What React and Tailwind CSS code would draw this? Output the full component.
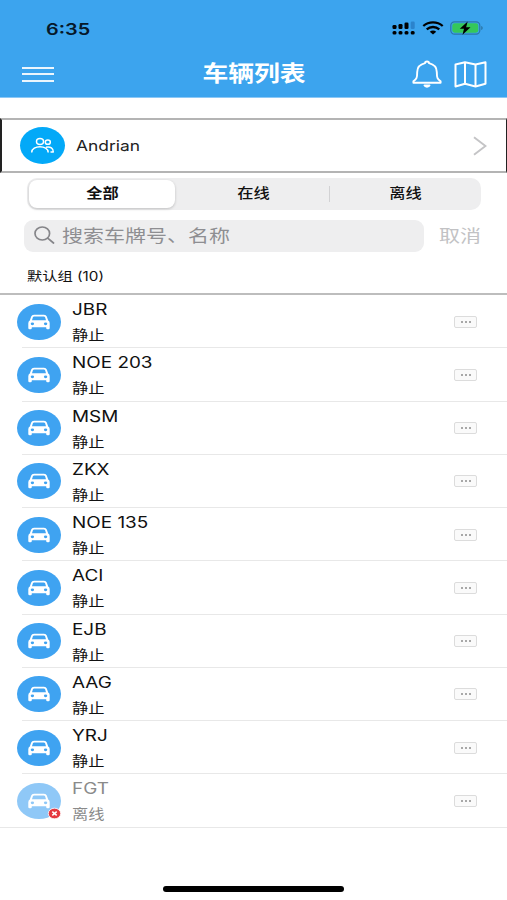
import { useState } from "react";

const vehicles = [
  { name: "JBR", online: true },
  { name: "NOE 203", online: true },
  { name: "MSM", online: true },
  { name: "ZKX", online: true },
  { name: "NOE 135", online: true },
  { name: "ACI", online: true },
  { name: "EJB", online: true },
  { name: "AAG", online: true },
  { name: "YRJ", online: true },
  { name: "FGT", online: false },
];

const tabs = ["全部", "在线", "离线"];

function StatusBar() {
  return (
    <div className="flex h-[50px] items-center justify-between pt-[5px] pr-[23px] pl-[46px]">
      <span className="mt-[2px] origin-left scale-x-[1.24] text-[16px] leading-none font-semibold text-[#06182a]">6:35</span>
      <div className="flex items-center">
        <svg width="24" height="14" viewBox="0 0 24 14" fill="#000">
          <rect x="0.5" y="4" width="4" height="4" rx="1.3" />
          <rect x="6.5" y="3" width="4" height="5" rx="1.3" />
          <rect x="12.5" y="1.5" width="4" height="6.5" rx="1.3" />
          <rect x="18.7" y="0.5" width="4" height="7.5" rx="1.3" fill="#2b83cc" />
          <rect x="0.5" y="10" width="4" height="3.6" rx="1.5" />
          <rect x="6.5" y="10" width="4" height="3.6" rx="1.5" />
          <rect x="12.5" y="10" width="4" height="3.6" rx="1.5" />
          <rect x="18.7" y="10" width="4" height="3.6" rx="1.5" />
        </svg>
        <svg className="ml-[6px]" width="22" height="14" viewBox="0 0 22 14" fill="none" stroke="#000" strokeWidth="2.3">
          <path d="M1.3 5C6.8.2 15.2.2 20.7 5" />
          <path d="M4.7 8.4C8.4 5.2 13.6 5.2 17.3 8.4" />
          <path d="M7.8 10.8C9.7 9.2 12.3 9.2 14.2 10.8L11 13.6z" fill="#000" stroke="none" />
        </svg>
        <svg className="ml-[6px]" width="34" height="14" viewBox="0 0 34 14">
          <rect x="0.8" y="0.8" width="29" height="12.4" rx="3.6" fill="none" stroke="#2c77a8" strokeWidth="1.2" />
          <rect x="2.3" y="2.3" width="26" height="9.4" rx="2.4" fill="#35c759" />
          <path d="M31.2 5v4c2-.5 2-3.5 0-4z" fill="#2c77a8" />
          <path d="M17.7.5 9.8 7.8h4.2l-1.5 5.9 8-7.5h-4.4z" fill="#000" />
        </svg>
      </div>
    </div>
  );
}

function Header() {
  return (
    <header className="h-[98px] border-b border-[#8cc8f6] bg-[#3ca4ee]">
      <StatusBar />
      <div className="grid h-[48px] grid-cols-[1fr_auto_1fr] items-center pr-[20px] pl-[22px]">
        <button className="flex w-[32px] flex-col gap-[4.5px]" aria-label="menu">
          <span className="h-[2px] bg-white/90" />
          <span className="h-[2px] bg-white/90" />
          <span className="h-[2px] bg-white/90" />
        </button>
        <h1 className="scale-x-[1.2] text-[21.5px] leading-none font-bold text-white">车辆列表</h1>
        <div className="flex justify-end gap-[12px]">
          <svg width="30" height="28" viewBox="0 0 30 28" fill="none" stroke="#fff" strokeWidth="1.9" strokeLinecap="round" strokeLinejoin="round">
            <path d="M13 3.2C13 1 17 1 17 3.2C22 4.4 24.8 8 24.8 12C24.8 18 25.5 19.2 28.6 21.2V22.8H1.4V21.2C4.5 19.2 5.2 18 5.2 12C5.2 8 8 4.4 13 3.2z" />
            <path d="M12.5 25.5c.6 1.6 4.4 1.6 5 0z" fill="#fff" />
          </svg>
          <svg width="33" height="28" viewBox="0 0 33 28" fill="none" stroke="#fff" strokeWidth="2" strokeLinejoin="round">
            <path d="M1.5 4.5 11 2.2 21.5 4.5 31.5 2.2V23.8L21.5 26.5 11 23.8 1.5 26.5z" />
            <path d="M11 2.2v21.6M21.5 4.500v22" />
          </svg>
        </div>
      </div>
    </header>
  );
}

function Account() {
  return (
    <div className="mt-[20px] flex h-[55px] items-center border-y-2 border-r border-l-2 border-y-[#b4b4b4] border-r-[#222] border-l-[#222] pr-[19px] pl-[18px]">
      <div className="flex h-[37px] w-[45px] items-center justify-center rounded-[50%] bg-[#03a9f8]">
        <svg width="25" height="17" viewBox="0 0 25 17" fill="none" stroke="#fff" strokeWidth="1.5" strokeLinejoin="round">
          <ellipse cx="10" cy="4.6" rx="3.5" ry="3" />
          <ellipse cx="17.8" cy="5.2" rx="2.5" ry="2.1" />
          <path d="M1.7 15.500C1.700 7.800 18.200 7.800 18.200 15.500" />
          <path d="M16 10.200C20.500 9 23.500 11.800 23.300 15H20.500" />
        </svg>
      </div>
      <span className="mt-[2px] ml-[11px] origin-left scale-x-[1.2] text-[14.5px] leading-none text-[#222]">Andrian</span>
      <svg className="ml-auto" width="14" height="20" viewBox="0 0 14 20" fill="none" stroke="#c4c4c6" strokeWidth="2">
        <path d="M1 1.2 12.5 10 1 18.8" />
      </svg>
    </div>
  );
}

function VehicleIcon({ online }) {
  return (
    <div className="relative shrink-0">
      <div
        className={
          online
            ? "flex h-[36px] w-[44px] items-center justify-center rounded-[50%] bg-[#3fa3f1]"
            : "flex h-[36px] w-[44px] items-center justify-center rounded-[50%] bg-[#8fc8f7]"
        }
      >
        <svg width="24" height="16" viewBox="0 0 24 16" fill="#fff">
          <path
            fillRule="evenodd"
            d="M7 .8H17q2.200 0 2.800 1.700L21.200 6.500q1.500.8 1.500 2.700V14q0 1.300-1.300 1.300H20.500q-1.300 0-1.300-1.300V13.300H4.800V14q0 1.300-1.300 1.300H2.600Q1.300 15.300 1.300 14V9.200Q1.300 7.300 2.800 6.500L4.200 2.500Q4.800.8 7 .8zM7.200 2.400Q6.200 2.400 5.900 3.200L5 6.300H19L18.100 3.200Q17.800 2.400 16.800 2.400zM3.700 9.800a1.700 1.400 0 1 0 3.400 0a1.700 1.400 0 1 0-3.400 0M16.900 9.800a1.700 1.400 0 1 0 3.400 0a1.700 1.400 0 1 0-3.400 0"
          />
        </svg>
      </div>
      {!online && (
        <svg className="absolute -right-px -bottom-px" width="16" height="13" viewBox="0 0 16 13">
          <ellipse cx="8.5" cy="6.5" rx="6.2" ry="5.3" fill="#e5383f" stroke="#fff" strokeWidth="0.8" />
          <path d="M6.3 4.600 10.700 8.400M10.700 4.600 6.300 8.400" stroke="#fff" strokeWidth="1.5" />
        </svg>
      )}
    </div>
  );
}

function VehicleRow({ name, online }) {
  return (
    <li className="group relative flex h-[53.25px] pl-[17px]">
      <div className="flex w-[44px] items-center">
        <VehicleIcon online={online} />
      </div>
      <div className={online ? "ml-[11px] flex flex-col text-[#111]" : "ml-[11px] flex flex-col text-[#8a8a8a]"}>
        <span className="mt-[6px] origin-left scale-x-[1.22] text-[15.5px] leading-[18px]">{name}</span>
        <span className="mt-[7px] origin-left scale-x-[1.2] text-[13.5px] leading-[18px]">{online ? "静止" : "离线"}</span>
      </div>
      <button
        className="mt-[20.500px] mr-[30px] ml-auto flex h-[12px] w-[23px] items-center justify-center gap-[2px] rounded-[2px] border border-[#dcdcdc] bg-[#fafafa]"
        aria-label="more"
      >
        <span className="h-[2px] w-[2px] bg-[#a8a8a8]" />
        <span className="h-[2px] w-[2px] bg-[#a8a8a8]" />
        <span className="h-[2px] w-[2px] bg-[#a8a8a8]" />
      </button>
      <div className="absolute right-0 bottom-0 left-[22px] h-px bg-[#e8e8e8] group-last:left-0" />
    </li>
  );
}

export default function App() {
  const [tab, setTab] = useState(0);

  return (
    <div className="flex h-[900px] w-[507px] flex-col overflow-hidden bg-white font-['Inter','Noto_Sans_CJK_SC',sans-serif]">
      <Header />
      <Account />

      {/* online / offline filter */}
      <div className="mt-[5px] ml-[27px] grid h-[32px] w-[454px] shrink-0 grid-cols-3 items-center rounded-[10px] bg-[#eeeeef]">
        {tabs.map((label, i) => (
          <button
            key={label}
            onClick={() => setTab(i)}
            className={
              i === tab
                ? "mr-[3px] ml-[2px] flex h-[28px] items-center justify-center rounded-[8px] bg-white font-bold shadow-[0_1px_3px_rgba(0,0,0,0.2)]"
                : "flex h-[16px] items-center justify-center border-[#d2d2d4] font-medium not-last:border-r"
            }
          >
            <span className="scale-x-[1.2] text-[13.5px] leading-none text-[#111]">{label}</span>
          </button>
        ))}
      </div>

      {/* search */}
      <div className="mt-[10px] flex h-[32px] shrink-0 items-center pl-[24px]">
        <div className="flex h-full w-[400px] items-center rounded-[9px] bg-[#eeeeef] pl-[10px]">
          <svg className="-mt-[2px]" width="21" height="18" viewBox="0 0 21 18" fill="none" stroke="#858589" strokeWidth="1.7" strokeLinecap="round">
            <ellipse cx="8.3" cy="7.5" rx="7.3" ry="6.5" />
            <path d="M13.7 12.2 19.5 17" />
          </svg>
          <span className="ml-[7px] origin-left scale-x-[1.2] text-[17.5px] leading-none text-[#8e8e92]">搜索车牌号、名称</span>
        </div>
        <span className="ml-[15px] origin-left scale-x-[1.2] text-[17.5px] leading-none text-[#c2c2c4]">取消</span>
      </div>

      <div className="flex h-[43px] shrink-0 items-center border-b-2 border-[#bdbdbd] pt-[9px] pl-[27px]">
        <span className="origin-left scale-x-[1.22] text-[12.5px] leading-none text-[#111]">默认组 (10)</span>
      </div>

      <ul>
        {vehicles.map((v) => (
          <VehicleRow key={v.name} name={v.name} online={v.online} />
        ))}
      </ul>

      {/* home indicator */}
      <div className="mt-auto mb-[8px] h-[6px] w-[181px] shrink-0 self-center rounded-full bg-black" />
    </div>
  );
}
